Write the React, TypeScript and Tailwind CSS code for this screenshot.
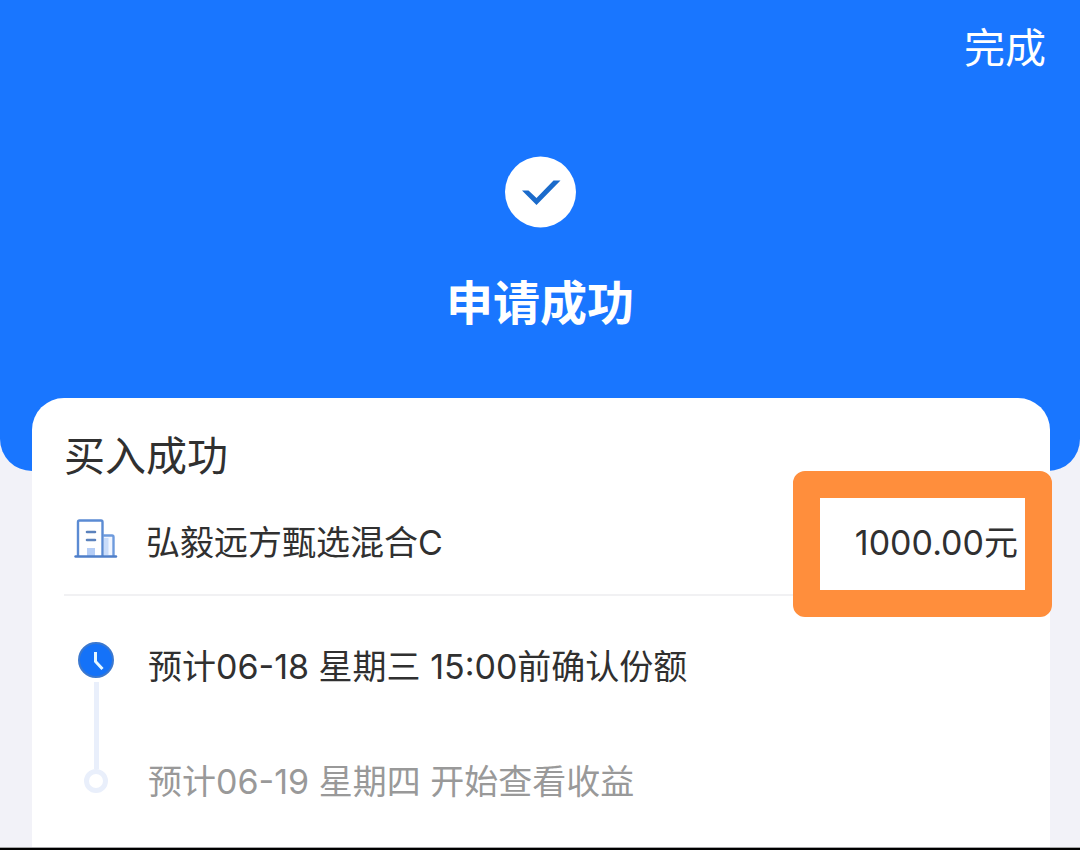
import React from 'react';

interface TimelineStep {
    text: string;
    active: boolean;
}

const steps: TimelineStep[] = [
    { text: '预计06-18 星期三 15:00前确认份额', active: true },
    { text: '预计06-19 星期四 开始查看收益', active: false },
];

const CheckIcon: React.FC = () => (
    <svg className="w-18 h-18" viewBox="0 0 72 72" fill="none" aria-hidden="true">
        <circle cx="36.5" cy="36" r="35.5" fill="#fff" />
        <path d="M18 34.500H24.500L32.500 42L49.500 24.500H56.500L32.500 49Z" fill="#1b6bcb" />
    </svg>
);

const BuildingIcon: React.FC = () => (
    <svg className="w-11 h-10 shrink-0" viewBox="0 0 44 40" fill="none" aria-hidden="true">
        <path d="M30 17H38.500V38H30Z" fill="#f0f5ff" />
        <path d="M30 20H34.500V37H30Z" fill="#c9dcfa" />
        <path d="M13 30H21V38H13Z" fill="#b4cdf6" />
        <path d="M4 38V4Q4 2.500 5.500 2.500H27Q28.500 2.500 28.500 4V38" stroke="#5b8bd3" strokeWidth="2.400" />
        <path d="M29 17.500H38Q39.500 17.500 39.500 19V38" stroke="#6d9add" strokeWidth="2.400" />
        <path d="M13 14H21M13 22H21" stroke="#5b82bd" strokeWidth="2.600" strokeLinecap="round" />
        <path d="M1.500 38.500H42" stroke="#4f7fc9" strokeWidth="2.400" strokeLinecap="round" />
    </svg>
);

const ClockIcon: React.FC = () => (
    <svg className="w-9 h-9" viewBox="0 0 36 36" fill="none" aria-hidden="true">
        <circle cx="18" cy="18" r="17" fill="#1472f8" stroke="#3b78cf" strokeWidth="2" />
        <path d="M17.500 10V19.500L24.500 27" stroke="#e6f7ff" strokeWidth="3" />
    </svg>
);

const App: React.FC = () => {
    return (
        <main
            lang="zh-CN"
            className="min-h-screen flex flex-col bg-[#f2f2f8] text-[#303030] font-[Inter,'Noto_Sans_CJK_SC',sans-serif]"
        >
            <header className="bg-[#1976ff] text-white rounded-b-[32px] pb-[136px]">
                <div className="flex justify-end pt-[18px] pr-[34px]">
                    <button type="button" className="text-[41px] leading-[60px]">
                        完成
                    </button>
                </div>
                <div className="flex flex-col items-center pt-[78px]">
                    <CheckIcon />
                    <h1 className="mt-[43px] text-[47px] leading-[64px] font-bold">申请成功</h1>
                </div>
            </header>

            <section className="flex-1 -mt-[73px] ml-8 mr-[30px] px-8 pt-7 pb-9 bg-white rounded-t-[32px]">
                <h2 className="text-[41px] leading-[60px]">买入成功</h2>

                <div className="relative flex items-start justify-between pt-8 pb-[26px] border-b-2 border-[#f1f1f3] text-[34px] leading-[50px]">
                    <div className="flex items-start pl-[10px]">
                        <BuildingIcon />
                        <span className="ml-7">弘毅远方甄选混合C</span>
                    </div>
                    <span>1000.00元</span>
                    <div className="absolute -right-[34px] -top-[15px] w-[259px] h-[146px] rounded-xl border-[27px] border-[#ff8e3c]" />
                </div>

                <ol className="pt-[46px] text-[34px] leading-[50px]">
                    {steps.map((step) => (
                        <li key={step.text} className="flex">
                            <div className="w-16 flex flex-col items-center">
                                {step.active ? (
                                    <>
                                        <ClockIcon />
                                        <span className="w-[5px] flex-1 mt-1 -mb-3 bg-[#e9effb]" />
                                    </>
                                ) : (
                                    <span className="w-6 h-6 mt-3 rounded-full border-[5px] border-[#e9effb]" />
                                )}
                            </div>
                            <p className={step.active ? 'ml-5 pb-[65px]' : 'ml-5 text-[#999999]'}>{step.text}</p>
                        </li>
                    ))}
                </ol>
            </section>

            <footer className="h-[3px] bg-black border-t border-[#a5a5a7]" />
        </main>
    );
};

export default App;
